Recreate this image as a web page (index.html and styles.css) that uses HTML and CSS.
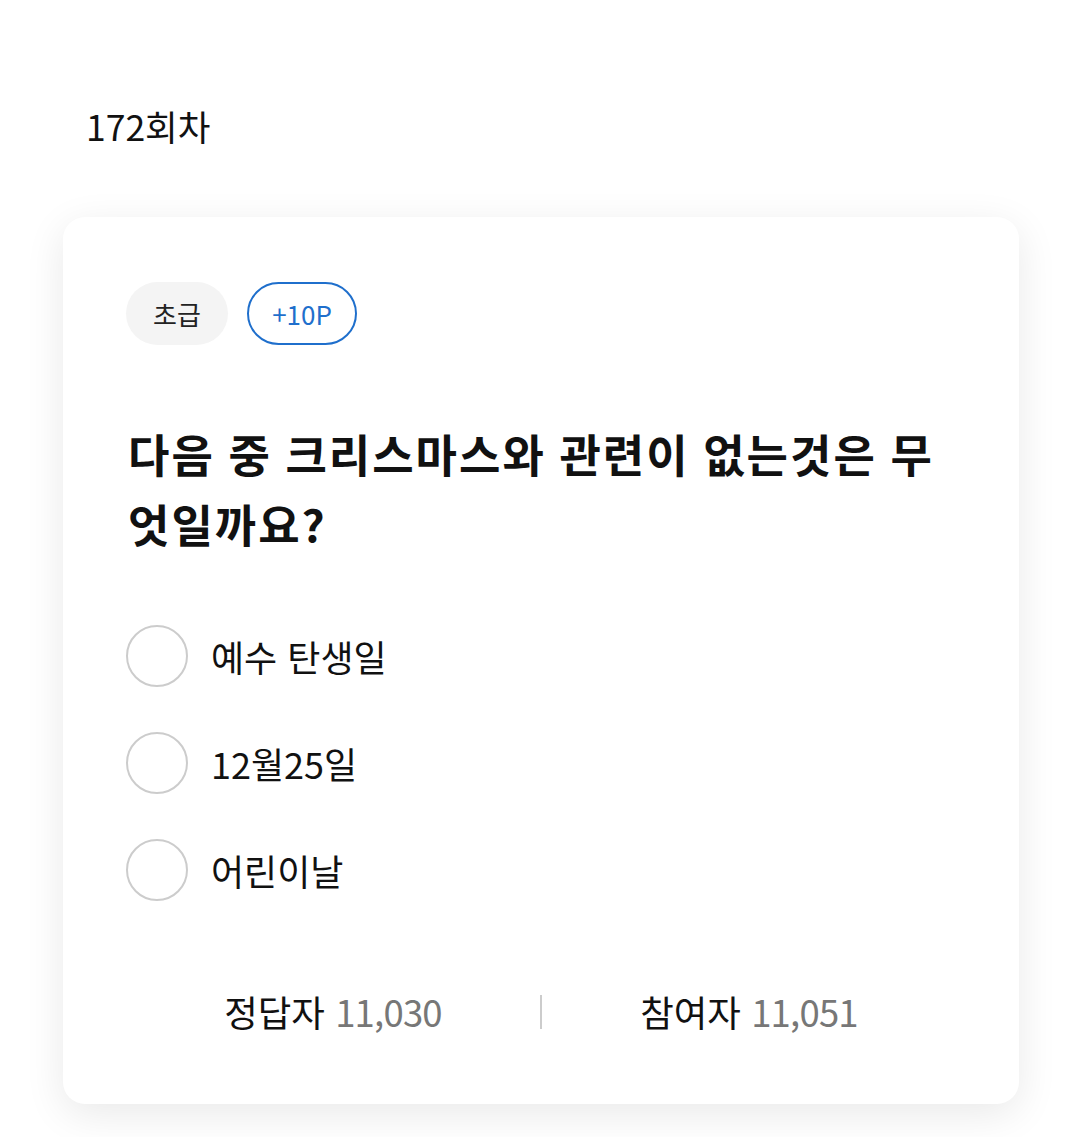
FILE: index.html
```html
<!DOCTYPE html>
<html lang="ko">
<head>
<meta charset="utf-8">
<title>172회차</title>
<link rel="stylesheet" href="styles.css">
</head>
<body>
<h1 class="round">172회차</h1>
<section class="card">
  <div class="badges">
    <span class="badge level">초급</span>
    <span class="badge point">+10P</span>
  </div>
  <h2 class="question">다음 중 크리스마스와 관련이 없는것은 무엇일까요?</h2>
  <ul class="options">
    <li class="option"><span class="radio"></span><span class="label">예수 탄생일</span></li>
    <li class="option"><span class="radio"></span><span class="label">12월25일</span></li>
    <li class="option"><span class="radio"></span><span class="label">어린이날</span></li>
  </ul>
  <div class="stats">
    <div class="stat">정답자 <span class="num">11,030</span></div>
    <div class="divider"></div>
    <div class="stat">참여자 <span class="num">11,051</span></div>
  </div>
</section>
</body>
</html>
```

FILE: styles.css
```css
* { box-sizing: border-box; }
html, body {
  margin: 0;
  padding: 0;
  background: #ffffff;
}
body {
  font-family: "Noto Sans CJK KR", "Noto Sans", sans-serif;
  color: #111111;
  width: 1075px;
  height: 1137px;
  overflow: hidden;
}
.round {
  margin: 101px 0 0 86px;
  font-size: 35.5px;
  font-weight: 400;
  line-height: 50px;
}
.card {
  margin: 66px 0 0 63px;
  width: 956px;
  background: #ffffff;
  border-radius: 22px;
  box-shadow: 0 10px 40px rgba(0, 0, 0, 0.09);
  padding: 65px 63px 67px 63px;
}
.badges {
  display: flex;
  gap: 19px;
  height: 63px;
}
.badge {
  display: flex;
  align-items: center;
  justify-content: center;
  height: 63px;
  border-radius: 32px;
  font-size: 26px;
  line-height: 1;
}
.level {
  width: 102px;
  background: #f4f4f4;
  color: #222222;
}
.point {
  width: 110px;
  border: 2px solid #1f6fcc;
  color: #1f6fcc;
}
.question {
  margin: 74px 0 0 0;
  padding-left: 2px;
  font-size: 45px;
  font-weight: 700;
  line-height: 70px;
  letter-spacing: 2px;
  word-spacing: -1px;
  color: #111111;
}
.options {
  list-style: none;
  margin: 66px 0 0 0;
  padding: 0;
  display: flex;
  flex-direction: column;
  gap: 45px;
}
.option {
  display: flex;
  align-items: center;
  gap: 23px;
  height: 62px;
}
.radio {
  width: 62px;
  height: 62px;
  border-radius: 50%;
  border: 2px solid #cccccc;
  flex: none;
}
.label {
  font-size: 36px;
  line-height: 1;
  color: #111111;
}
.stats {
  margin-top: 86px;
  display: grid;
  grid-template-columns: 1fr 2px 1fr;
  align-items: center;
  height: 50px;
}
.stat {
  text-align: center;
  font-size: 36.5px;
  line-height: 50px;
  color: #111111;
}
.num {
  color: #777777;
  letter-spacing: -0.8px;
}
.divider {
  width: 2px;
  height: 34px;
  background: #cccccc;
}
```
